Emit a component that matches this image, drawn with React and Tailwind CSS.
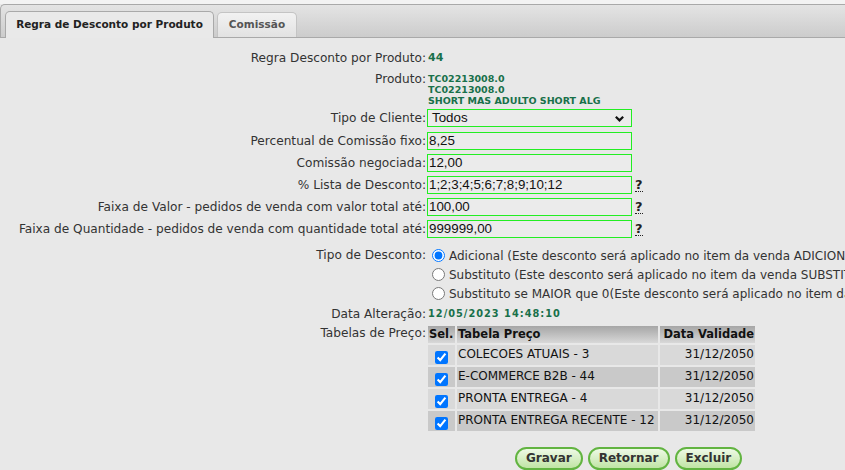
import React from "react";

const Label = ({ children, className = "" }) => (
  <div className={"w-[426px] shrink-0 text-right whitespace-nowrap text-[12.15px] " + className}>{children}</div>
);

const Input = ({ value }) => (
  <div className="h-[18px] w-[205px] border border-[#22ee22] bg-[#ebebeb] pl-[1px] font-['Liberation_Sans',Arial,sans-serif] text-[13.33px] leading-[16px] text-[#111]">
    {value}
  </div>
);

const Help = () => (
  <span className="ml-[3px] font-bold text-[13px] leading-[13px] text-[#222] border-b border-dotted border-[#222]">?</span>
);

const rows = [
  ["COLECOES ATUAIS - 3", "31/12/2050"],
  ["E-COMMERCE B2B - 44", "31/12/2050"],
  ["PRONTA ENTREGA - 4", "31/12/2050"],
  ["PRONTA ENTREGA RECENTE - 12", "31/12/2050"],
];

const Btn = ({ children }) => (
  <button className="h-[23px] rounded-full border-2 border-[#62b441] bg-gradient-to-b from-[#eef9e6] to-[#c0e4a4] px-[9px] text-[12px] font-bold leading-[19px] text-[#333]">
    {children}
  </button>
);

const head = "h-[17px] whitespace-nowrap bg-gradient-to-b from-[#a6a6a6] to-[#d8d8d8] font-bold leading-[17px] text-[11.5px] text-[#111]";

export default function App() {
  return (
    <div className="h-[470px] w-[845px] overflow-hidden bg-[#e8e8e8] font-['DejaVu_Sans',Verdana,sans-serif] text-[12px] text-[#333]">
      <div className="h-[4px] bg-[#f3f3f3]" />
      <div className="flex h-[34px] items-end gap-[3px] rounded-tl-[5px] border-b border-l border-t border-[#a9a9a9] bg-gradient-to-b from-[#e4e4e4] to-[#cccccc] pl-[4px]">
        <div className="relative z-10 mb-[-1px] flex h-[27px] w-[209px] items-center justify-center rounded-t-[5px] border border-b-0 border-[#a9a9a9] bg-[#e9e9e9] text-[10.5px] font-bold text-[#222]">
          Regra de Desconto por Produto
        </div>
        <div className="flex h-[25px] w-[80px] items-center justify-center rounded-t-[5px] border border-b-0 border-[#c4c4c4] bg-gradient-to-b from-[#f2f2f2] to-[#e2e2e2] text-[10.5px] font-bold text-[#555]">
          Comissão
        </div>
      </div>

      <div className="pt-[10px]">
        <div className="flex h-[20px] items-center">
          <Label>Regra Desconto por Produto:</Label>
          <div className="pl-[2px] text-[11px] font-bold text-[#18704a]">44</div>
        </div>

        <div className="mt-[4px] flex items-start">
          <Label className="leading-[14px]">Produto:</Label>
          <div className="pl-[2px] pt-[1px] text-[9.5px] font-bold leading-[11px] text-[#18704a]">
            <div>TC02213008.0</div>
            <div>TC02213008.0</div>
            <div>SHORT MAS ADULTO SHORT ALG</div>
          </div>
        </div>

        <div className="flex h-[24px] items-center">
          <Label>Tipo de Cliente:</Label>
          <div className="ml-[1px] flex h-[18px] w-[205px] items-center justify-between border border-[#22ee22] bg-[#ebebeb] pl-[4px] pr-[6px] font-['Liberation_Sans',Arial,sans-serif] text-[13.33px] text-[#111]">
            <span>Todos</span>
            <svg viewBox="0 0 12 12" className="h-[11px] w-[11px]">
              <path d="M2 4 L6 8 L10 4" fill="none" stroke="#111" strokeWidth="2.4" />
            </svg>
          </div>
        </div>

        {[
          ["Percentual de Comissão fixo:", "8,25", false],
          ["Comissão negociada:", "12,00", false],
          ["% Lista de Desconto:", "1;2;3;4;5;6;7;8;9;10;12", true],
          ["Faixa de Valor - pedidos de venda com valor total até:", "100,00", true],
          ["Faixa de Quantidade - pedidos de venda com quantidade total até:", "999999,00", true],
        ].map(([l, v, h]) => (
          <div key={l} className="flex h-[22px] items-center">
            <Label>{l}</Label>
            <div className="ml-[1px] flex items-center">
              <Input value={v} />
              {h && <Help />}
            </div>
          </div>
        ))}

        <div className="mt-[6px] flex items-start">
          <Label className="leading-[19px]">Tipo de Desconto:</Label>
          <div className="min-w-0 flex-1 overflow-hidden whitespace-nowrap pl-[1px]">
            {[
              ["Adicional (Este desconto será aplicado no item da venda ADICIONALMENTE aos demais descontos)", true],
              ["Substituto (Este desconto será aplicado no item da venda SUBSTITUINDO os demais descontos)", false],
              ["Substituto se MAIOR que 0(Este desconto será aplicado no item da venda somente se for maior que 0)", false],
            ].map(([t, c]) => (
              <label key={t} className="flex h-[19px] items-center">
                <input type="radio" name="tipo" defaultChecked={c} className="ml-[5px] mr-[4px] h-[13px] w-[13px] shrink-0" />
                <span>{t}</span>
              </label>
            ))}
          </div>
        </div>

        <div className="mt-[1px] flex h-[20px] items-center">
          <Label>Data Alteração:</Label>
          <div className="pl-[2px] text-[9.8px] font-bold tracking-[1px] text-[#18704a]">12/05/2023 14:48:10</div>
        </div>

        <div className="mt-[2px] flex items-start">
          <Label className="leading-[14px]">Tabelas de Preço:</Label>
          <div className="ml-[2px] grid grid-cols-[27px_201px_95px] gap-[2px] text-[#111]">
            <div className={head + " pl-[1px]"}>Sel.</div>
            <div className={head + " pl-[1px]"}>Tabela Preço</div>
            <div className={head + " pr-[1px] text-right"}>Data Validade</div>
            {rows.map(([n, d], i) => {
              const bg = i % 2 === 0 ? "bg-[#d9d9d9]" : "bg-[#c9c9c9]";
              return (
                <React.Fragment key={n}>
                  <div className={"flex h-[20px] items-end justify-center pb-[1px] " + bg}>
                    <input type="checkbox" defaultChecked className="h-[13px] w-[13px]" />
                  </div>
                  <div className={"h-[20px] whitespace-nowrap pl-[1px] leading-[18px] " + bg}>{n}</div>
                  <div className={"h-[20px] pr-[1px] text-right leading-[18px] " + bg}>{d}</div>
                </React.Fragment>
              );
            })}
          </div>
        </div>

        <div className="mt-[16px] flex gap-[5px] pl-[515px]">
          <Btn>Gravar</Btn>
          <Btn>Retornar</Btn>
          <Btn>Excluir</Btn>
        </div>
      </div>
    </div>
  );
}
